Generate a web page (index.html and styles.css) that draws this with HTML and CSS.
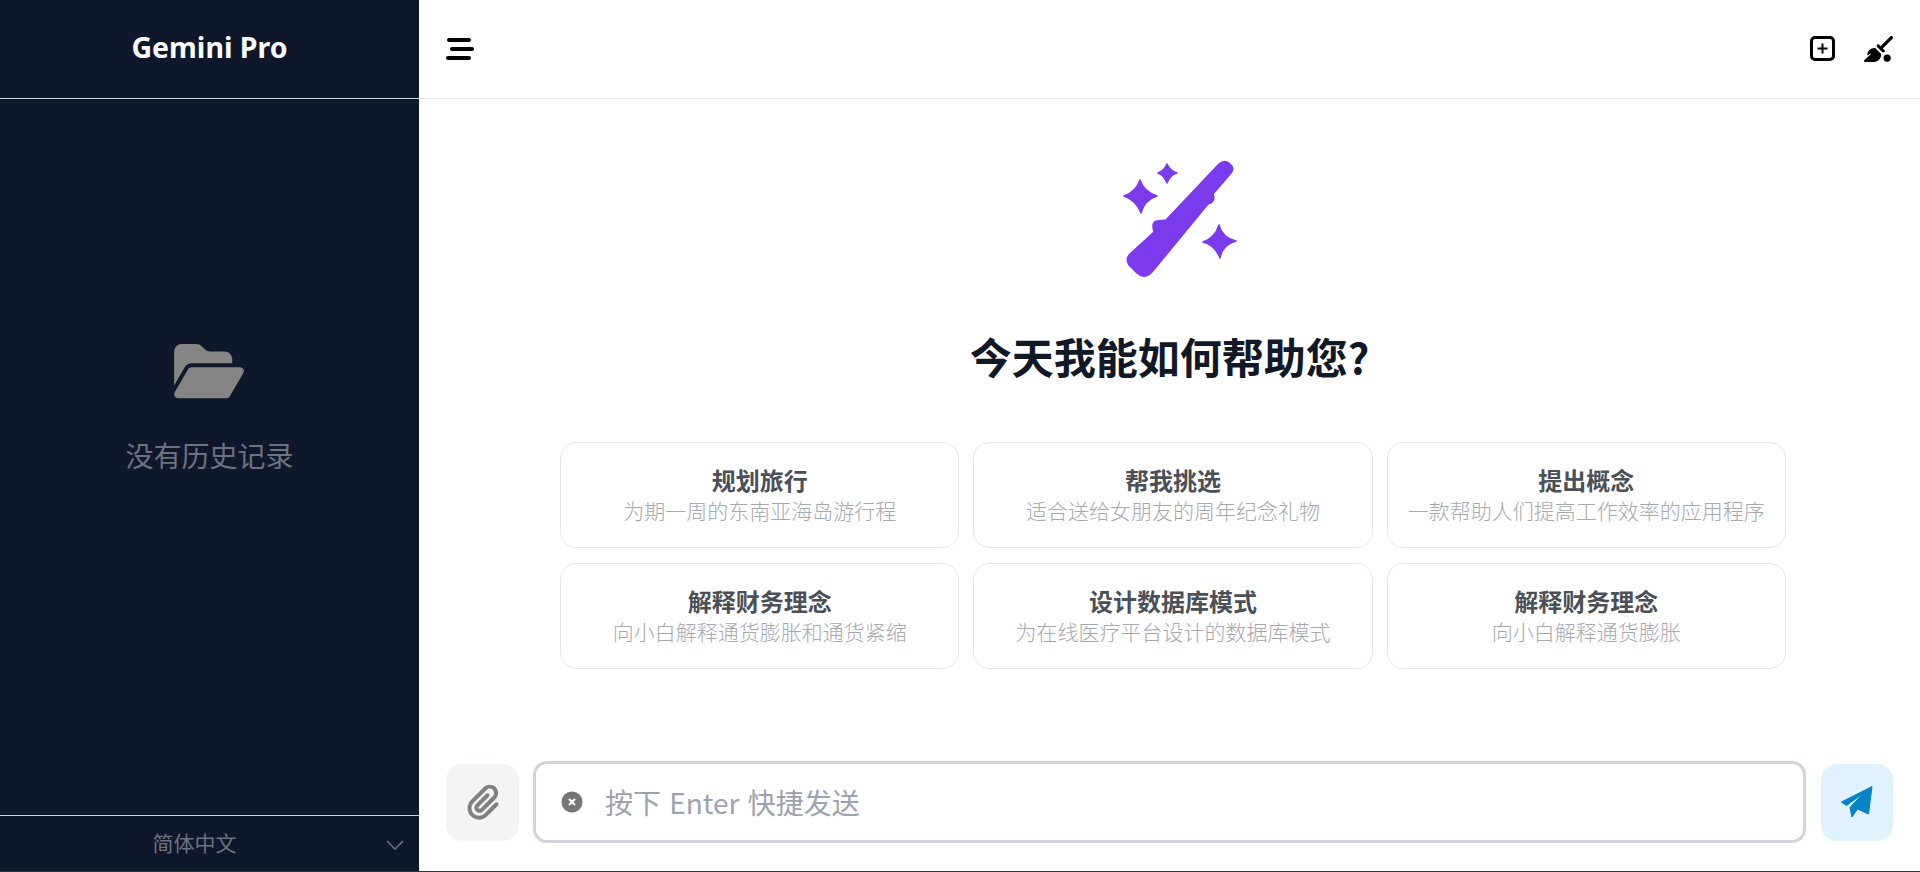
FILE: index.html

```html
<!DOCTYPE html>
<html lang="zh-CN">
<head>
    <meta charset="UTF-8">
    <meta name="viewport" content="width=device-width, initial-scale=1.0">
    <title>Gemini Pro</title>
    <link rel="stylesheet" href="styles.css">
</head>
<body>
    <div class="app">
        <!-- Sidebar -->
        <aside class="sidebar">
            <div class="sidebar-head">Gemini Pro</div>
            <div class="history-empty">
                <svg class="folder-icon" viewBox="0 0 576 512" aria-hidden="true">
                    <path d="M88.7 223.8L0 375.8V96C0 60.7 28.7 32 64 32H181.5c17 0 33.3 6.7 45.3 18.7l26.5 26.5c12 12 28.3 18.7 45.3 18.7H416c35.3 0 64 28.7 64 64v32H144c-22.8 0-43.8 12.1-55.3 31.8zm27.6 16.1C122.1 230 132.6 224 144 224H544c11.5 0 22 6.1 27.7 16.1s5.7 22.2-.1 32.1l-112 192C453.9 474 443.4 480 432 480H32c-11.5 0-22-6.1-27.7-16.1s-5.7-22.2 .1-32.1l112-192z"/>
                </svg>
                <p>没有历史记录</p>
            </div>
            <div class="lang-select">
                <span>简体中文</span>
                <svg class="chevron" viewBox="0 0 18 10" aria-hidden="true">
                    <path d="M1 1l8 8 8-8"/>
                </svg>
            </div>
        </aside>

        <!-- Main -->
        <main class="main">
            <header class="topbar">
                <svg class="menu-icon" viewBox="0 0 28 22" aria-hidden="true">
                    <rect x="1" y="0" width="24" height="4" rx="2"/>
                    <rect x="4" y="9" width="24" height="4" rx="2"/>
                    <rect x="0" y="18" width="25" height="4" rx="2"/>
                </svg>
                <div class="topbar-actions">
                    <svg class="plus-icon" viewBox="0 0 25 25" aria-hidden="true">
                        <rect x="1.5" y="1.5" width="22" height="22" rx="3.5"/>
                        <path d="M12.5 7.5v10M7.5 12.5h10"/>
                    </svg>
                    <svg class="broom-icon" viewBox="0 0 576 512" aria-hidden="true">
                        <path d="M566.6 54.6c12.5-12.5 12.5-32.8 0-45.3s-32.8-12.5-45.3 0l-192 192-34.7-34.7c-4.2-4.2-10-6.6-16-6.6c-12.5 0-22.6 10.1-22.6 22.6v29.1L364.3 320h29.1c12.5 0 22.6-10.1 22.6-22.6c0-6-2.4-11.8-6.6-16l-34.7-34.7 192-192zM341.1 353.4L222.6 234.9c-42.7-3.7-85.2 11.7-115.8 42.3l-8 8C76.5 307.5 64 337.7 64 369.2c0 6.8 7.1 11.2 13.2 8.2l51.1-25.5c5-2.5 9.5 4.1 5.4 7.9L7.3 473.4C2.7 477.6 0 483.6 0 489.9C0 502.1 9.9 512 22.1 512l173.3 0c38.8 0 75.9-15.4 103.4-42.8c30.6-30.6 45.9-73.1 42.3-115.8z"/>
                        <circle cx="460" cy="436" r="72"/>
                    </svg>
                </div>
            </header>

            <section class="hero">
                <svg class="wand-icon" viewBox="0 0 150 130" aria-hidden="true">
                    <path d="M119 14Q125 9 130 14Q135 18 131 23L113 44Q116 52 108 54L52 122Q44 130 37 123L29 115Q25 109 30 104L54 82Q51 72 57 71L66 70Z"/>
                    <path d="M40 30Q44 42 57 46Q44 50 41 63Q36 50 24 46Q36 42 40 30Z"/>
                    <path d="M67 14Q70 21 77 23Q70 25 67 33Q64 25 58 23Q64 21 67 14Z"/>
                    <path d="M119 75Q122 88 136 91Q122 95 120 108Q115 95 103 92Q115 88 119 75Z"/>
                </svg>
                <h1>今天我能如何帮助您?</h1>
                <div class="prompt-grid">
                    <div class="prompt-card"><h3>规划旅行</h3><p>为期一周的东南亚海岛游行程</p></div>
                    <div class="prompt-card"><h3>帮我挑选</h3><p>适合送给女朋友的周年纪念礼物</p></div>
                    <div class="prompt-card"><h3>提出概念</h3><p>一款帮助人们提高工作效率的应用程序</p></div>
                    <div class="prompt-card"><h3>解释财务理念</h3><p>向小白解释通货膨胀和通货紧缩</p></div>
                    <div class="prompt-card"><h3>设计数据库模式</h3><p>为在线医疗平台设计的数据库模式</p></div>
                    <div class="prompt-card"><h3>解释财务理念</h3><p>向小白解释通货膨胀</p></div>
                </div>
            </section>

            <div class="composer">
                <button class="attach-btn" type="button" aria-label="attach">
                    <svg viewBox="0 0 448 512" aria-hidden="true">
                        <path d="M364.2 83.8c-24.4-24.4-64-24.4-88.4 0l-184 184c-42.1 42.1-42.1 110.3 0 152.4s110.3 42.1 152.4 0l152-152c10.9-10.9 28.7-10.9 39.6 0s10.9 28.7 0 39.6l-152 152c-64 64-167.6 64-231.6 0s-64-167.6 0-231.6l184-184c46.3-46.3 121.3-46.3 167.6 0s46.3 121.3 0 167.6l-176 176c-28.6 28.6-75 28.6-103.6 0s-28.6-75 0-103.6l144-144c10.9-10.9 28.7-10.9 39.6 0s10.9 28.7 0 39.6l-144 144c-6.7 6.7-6.7 17.7 0 24.4s17.7 6.7 24.4 0l176-176c24.4-24.4 24.4-64 0-88.4z"/>
                    </svg>
                </button>
                <div class="input-box">
                    <svg class="clear-icon" viewBox="0 0 22 22" aria-hidden="true">
                        <circle cx="11" cy="11" r="10.5"/>
                        <path d="M8 8l6 6M14 8l-6 6"/>
                    </svg>
                    <input type="text" placeholder="按下 Enter 快捷发送">
                </div>
                <button class="send-btn" type="button" aria-label="send">
                    <svg viewBox="58 35 38 36" aria-hidden="true">
                        <path d="M61.5 53L92 37.5L88.5 65L77.5 60L72 68L70 58.5L82.5 45L66.5 56.5Z"/>
                    </svg>
                </button>
            </div>
        </main>
    </div>
</body>
</html>
```

FILE: styles.css

```css
:root {
    --navy: #0f172a;
    --border: #e5e7eb;
    --sans: "Noto Sans", "Noto Sans CJK SC", sans-serif;
    --cjk: "Noto Sans CJK SC", "Noto Sans", sans-serif;
}

* {
    box-sizing: border-box;
}

body {
    margin: 0;
    height: 872px;
    overflow: hidden;
    background: #333;
    font-family: var(--cjk);
}

.app {
    display: flex;
    height: 871px;
}

/* Sidebar */
.sidebar {
    width: 419px;
    display: flex;
    flex-direction: column;
    background: var(--navy);
}

.sidebar-head {
    height: 99px;
    padding-bottom: 4px;
    display: flex;
    align-items: center;
    justify-content: center;
    border-bottom: 1px solid #cbd5e1;
    color: #f8fafc;
    font-family: var(--sans);
    font-size: 28.5px;
    font-weight: 700;
}

.history-empty {
    flex: 1;
    display: flex;
    flex-direction: column;
    align-items: center;
    padding-top: 241px;
}

.folder-icon {
    width: 70px;
    height: 62px;
    margin-right: 2px;
    fill: #858585;
}

.history-empty p {
    margin: 33px 0 0;
    color: #6b7280;
    font-size: 28px;
    line-height: 40px;
}

.lang-select {
    height: 56px;
    padding: 0 30px 3px 0;
    display: flex;
    align-items: center;
    justify-content: center;
    position: relative;
    border-top: 1px solid #cbd5e1;
    color: #6b7280;
    font-size: 21px;
}

.chevron {
    position: absolute;
    right: 15px;
    top: 24px;
    width: 18px;
    height: 10px;
    fill: none;
    stroke: #6b7280;
    stroke-width: 1.6;
}

/* Main */
.main {
    flex: 1;
    display: flex;
    flex-direction: column;
    background: #fff;
}

.topbar {
    height: 99px;
    padding: 0 27px;
    display: flex;
    align-items: center;
    justify-content: space-between;
    border-bottom: 1px solid var(--border);
}

.menu-icon {
    width: 28px;
    height: 22px;
    margin-bottom: 1px;
}

.topbar-actions {
    display: flex;
    align-items: center;
    gap: 29px;
}

.plus-icon {
    width: 25px;
    height: 25px;
    margin-bottom: 1px;
    fill: none;
    stroke: #000;
    stroke-width: 3;
}

.plus-icon path {
    stroke-width: 2;
}

.broom-icon {
    width: 29px;
    height: 26px;
    margin-bottom: 1px;
}

.hero {
    flex: 1;
    padding-top: 51px;
    display: flex;
    flex-direction: column;
    align-items: center;
}

.wand-icon {
    width: 150px;
    height: 130px;
    margin-left: 11px;
    fill: #7c3aed;
    stroke: #7c3aed;
    stroke-width: 1.5;
    stroke-linejoin: round;
}

.hero h1 {
    margin: 48px 0 0;
    color: #111827;
    font-size: 42px;
    font-weight: 700;
    line-height: 56px;
}

.prompt-grid {
    width: 1226px;
    margin: 58px 0 0 7px;
    display: grid;
    grid-template-columns: repeat(3, 1fr);
    gap: 15px 14px;
}

.prompt-card {
    height: 106px;
    padding-top: 20px;
    border: 1px solid var(--border);
    border-radius: 16px;
    text-align: center;
}

.prompt-card h3 {
    margin: 0;
    color: #4b5058;
    font-size: 24px;
    font-weight: 700;
    line-height: 33px;
}

.prompt-card p {
    margin: 0;
    color: #a5a8af;
    font-size: 21px;
    font-weight: 300;
    line-height: 28px;
}

/* Composer */
.composer {
    padding: 0 27px 28px;
    display: flex;
    align-items: center;
    gap: 14px;
}

.attach-btn,
.send-btn {
    height: 77px;
    padding: 0;
    display: flex;
    align-items: center;
    justify-content: center;
    flex-shrink: 0;
    border: none;
    border-radius: 16px;
}

.attach-btn {
    width: 73px;
    background: #f3f4f6;
}

.attach-btn svg {
    width: 32px;
    height: 36px;
    fill: #808080;
}

.send-btn {
    width: 72px;
    margin-left: 1px;
    background: #e0f2fe;
}

.send-btn svg {
    width: 38px;
    height: 36px;
    fill: #0284c7;
    stroke: #0284c7;
    stroke-width: 1;
    stroke-linejoin: round;
}

.input-box {
    flex: 1;
    height: 82px;
    padding-left: 25px;
    display: flex;
    align-items: center;
    gap: 22px;
    border: 3px solid #d1d5db;
    border-radius: 14px;
}

.clear-icon {
    width: 22px;
    height: 22px;
    flex-shrink: 0;
    fill: #757575;
    stroke: none;
}

.clear-icon path {
    fill: none;
    stroke: #fff;
    stroke-width: 2;
}

.input-box input {
    flex: 1;
    border: none;
    outline: none;
    padding: 0;
    font-family: var(--cjk);
    font-size: 28px;
    word-spacing: 2px;
}

.input-box input::placeholder {
    color: #9ca3af;
}
```
